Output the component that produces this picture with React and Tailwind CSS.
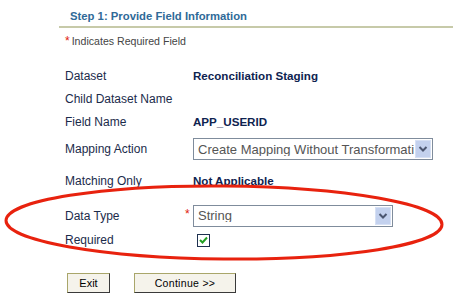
import React from "react";

function SelectBox({ text, width }) {
  return (
    <div className={`flex h-[22px] items-center border border-[#7f8c9c] bg-white ${width}`}>
      <div className="flex-1 overflow-hidden whitespace-nowrap pl-[4px] text-[13px] leading-none text-[#555555]">
        {text}
      </div>
      <div className="m-[1px] flex h-[18px] w-[16px] items-center justify-center border border-[#d6e0f4] bg-[#c3d1ee]">
        <svg width="10" height="8" viewBox="0 0 10 8">
          <path d="M1.5 2 L5 5.5 L8.5 2" fill="none" stroke="#4b5670" strokeWidth="2" />
        </svg>
      </div>
    </div>
  );
}

function Row({ h, label, children }) {
  return (
    <div className={`flex items-center ${h}`}>
      <div className="w-[128px] text-[12px] leading-none text-[#1b2b4b]">{label}</div>
      <div className="flex items-center">{children}</div>
    </div>
  );
}

export default function App() {
  return (
    <div className="relative h-[300px] w-[460px] overflow-hidden bg-white font-['Liberation_Sans',Arial,sans-serif]">
      <div className="ml-[59px] mr-[7px] pt-[10px]">
        <div className="border-b-2 border-[#c7caa9] pb-[4px] pl-[11px] text-[11.3px] font-bold leading-[12px] text-[#2f6a98]">
          Step 1: Provide Field Information
        </div>
        <div className="mt-[7px] flex items-center pl-[6px] text-[10.6px] leading-[12px] text-[#444444]">
          <span className="mr-[2px] text-[12px] text-[#e0200a]">*</span>
          Indicates Required Field
        </div>
      </div>
      <div className="mt-[18px] pl-[65px]">
        <Row h="h-[22px]" label="Dataset">
          <span className="text-[11.6px] font-bold leading-none text-[#0e2350]">Reconciliation Staging</span>
        </Row>
        <Row h="h-[23px]" label="Child Dataset Name" />
        <Row h="h-[24px]" label="Field Name">
          <span className="text-[11.6px] font-bold leading-none text-[#0e2350]">APP_USERID</span>
        </Row>
        <Row h="h-[30px]" label="Mapping Action">
          <SelectBox text="Create Mapping Without Transformati" width="w-[240px]" />
        </Row>
        <Row h="h-[34px]" label="Matching Only">
          <span className="text-[11.6px] font-bold leading-none text-[#0e2350]">Not Applicable</span>
        </Row>
        <div className="flex h-[35px] items-center">
          <div className="w-[120px] text-[12px] leading-none text-[#1b2b4b]">Data Type</div>
          <div className="w-[8px] self-center pb-[4px] text-[12px] leading-none text-[#e0200a]">*</div>
          <SelectBox text="String" width="w-[200px]" />
        </div>
        <Row h="h-[14px]" label="Required">
          <div className="ml-[4px] flex h-[13px] w-[13px] items-center justify-center border border-[#1e3150] bg-white">
            <svg width="9" height="8" viewBox="0 0 9 8">
              <path d="M1 4 L3.5 6.5 L8 1.5" fill="none" stroke="#22a022" strokeWidth="2" />
            </svg>
          </div>
        </Row>
      </div>
      <div className="mt-[26px] flex gap-[24px] pl-[67px]">
        <button className="flex h-[20px] w-[43px] items-center justify-center border border-b-[#3a3a3a] border-l-[#a9a66a] border-r-[#3a3a3a] border-t-[#a9a66a] bg-[#f5f3eb] text-[11px] leading-none text-black">
          Exit
        </button>
        <button className="flex h-[20px] w-[102px] items-center justify-center border border-b-[#3a3a3a] border-l-[#a9a66a] border-r-[#3a3a3a] border-t-[#a9a66a] bg-[#f5f3eb] text-[10.5px] leading-none tracking-[0.3px] text-black">
          Continue &gt;&gt;
        </button>
      </div>
      <svg className="pointer-events-none absolute left-0 top-0" width="460" height="300" viewBox="0 0 460 300">
        <ellipse cx="224" cy="222.5" rx="218" ry="36.5" fill="none" stroke="#e8220e" strokeWidth="3" transform="rotate(0.5 224 222.5)" />
      </svg>
    </div>
  );
}
